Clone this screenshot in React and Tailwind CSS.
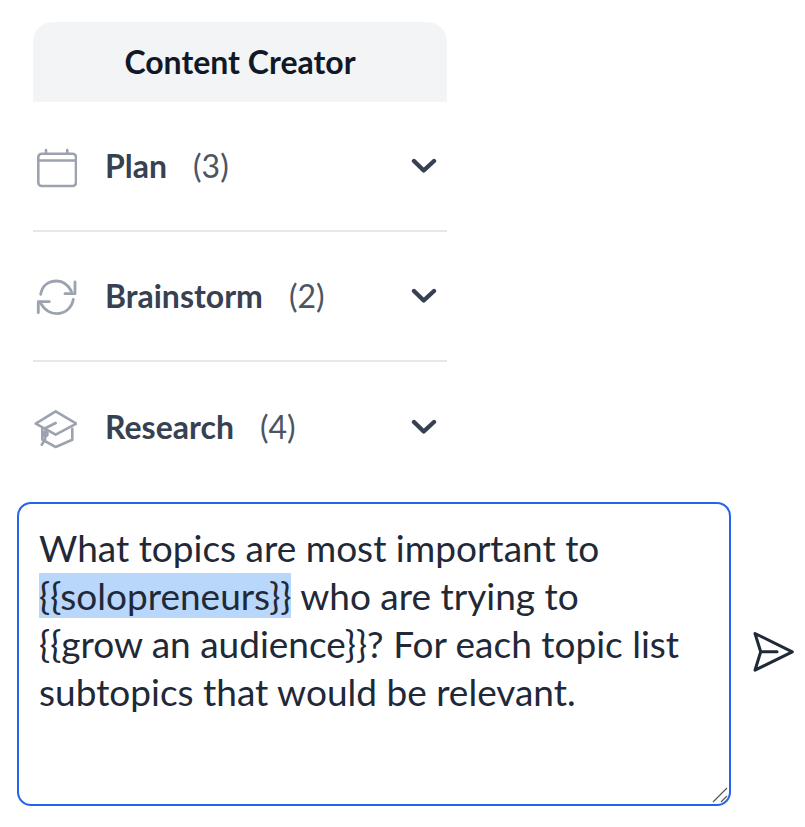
const rows = [
  { name: 'Plan', count: 3, icon: CalendarIcon },
  { name: 'Brainstorm', count: 2, icon: RefreshIcon },
  { name: 'Research', count: 4, icon: CapIcon },
]

function CalendarIcon() {
  return (
    <svg width="44" height="44" viewBox="0 0 44 44" fill="none" stroke="#9ca3af" strokeWidth="2.6" strokeLinecap="round" strokeLinejoin="round">
      <rect x="5.300" y="9.700" width="37.700" height="32.300" rx="3.500" />
      <path d="M5.500 16.500H43M13 6v3.500M34.300 6v3.500" />
    </svg>
  )
}

function RefreshIcon() {
  return (
    <svg width="44" height="44" viewBox="0 0 44 44" fill="none" stroke="#9ca3af" strokeWidth="2.800" strokeLinecap="round" strokeLinejoin="round">
      <path d="M7.700 20.300C9 12 15 7 23.700 7c5.800 0 11 3 14.800 10.500" />
      <path d="M42 8v11.700H32" />
      <path d="M40.300 25.300C39 33.500 32.500 39.700 23.700 39.700c-6.700 0-12-3.700-16.500-11" />
      <path d="M5.300 38.700V27.700H16.300" />
    </svg>
  )
}

function CapIcon() {
  return (
    <svg width="44" height="44" viewBox="0 0 44 44" fill="none" stroke="#9ca3af" strokeWidth="2.600" strokeLinecap="round" strokeLinejoin="round">
      <path d="M22.700 6.300 43.300 18.700 22.700 29.700 2.700 18.700Z" />
      <path d="M9.300 23v11.700L22.700 42l16.600-7.300V23.700" />
      <path d="M22.700 18 12.700 23 12 34.700 8.700 39.700" />
      <circle cx="12.500" cy="29" r="2" />
    </svg>
  )
}

function SendIcon() {
  return (
    <svg width="44" height="44" viewBox="0 0 44 44" fill="none" stroke="#1f2937" strokeWidth="3" strokeLinecap="round" strokeLinejoin="round">
      <path d="M3 3.500 40.300 21.800 3 40.200 8.700 21.800ZM8.700 21.800H25" />
    </svg>
  )
}

function Chevron() {
  return (
    <svg width="26" height="16" viewBox="0 0 26 16" fill="none" stroke="#374151" strokeWidth="4.400" strokeLinecap="round" strokeLinejoin="round">
      <path d="M3 3 12.700 12.500 23 3" />
    </svg>
  )
}

export default function App() {
  return (
    <div className="w-[805px] h-[827px] bg-white overflow-hidden font-['Lato',sans-serif]">
      <div className="ml-[33px] pt-[22px] w-[414px]">
        <div className="h-[80px] bg-[#f3f4f6] rounded-t-[20px] flex items-center justify-center text-[32px] font-bold text-[#111827]">
          Content Creator
        </div>
        {rows.map((r, i) => {
          const Icon = r.icon
          return (
            <div key={r.name} className={`h-[130px] flex items-center pr-[10px] ${i < 2 ? 'border-b-2 border-[#e5e7eb]' : ''}`}>
              <div className="w-[72px] shrink-0"><Icon /></div>
              <span className="text-[32px] font-bold text-[#374151]">{r.name}</span>
              <span className="ml-[26px] text-[32px] text-[#4b5563]">({r.count})</span>
              <div className="ml-auto"><Chevron /></div>
            </div>
          )
        })}
      </div>
      <div className="mt-[10px] ml-[17px] flex items-center">
        <div className="relative w-[714px] h-[304px] rounded-[14px] border-2 border-[#2563eb] pt-[20px] px-[20px] text-[37px] leading-[48px] text-[#1f2937] whitespace-nowrap">
          <div>What topics are most important to</div>
          <div><span className="bg-[#b9d6fb]">{'{{solopreneurs}}'}</span> who are trying to</div>
          <div>{'{{grow an audience}}? For each topic list'}</div>
          <div>subtopics that would be relevant.</div>
          <svg className="absolute right-[1px] bottom-[1px]" width="16" height="16" viewBox="0 0 16 16" fill="none" stroke="#555" strokeWidth="1.200">
            <path d="M1 15 15 1M9 15l6-6" />
          </svg>
        </div>
        <div className="ml-[21px] mt-[-4px]"><SendIcon /></div>
      </div>
    </div>
  )
}
